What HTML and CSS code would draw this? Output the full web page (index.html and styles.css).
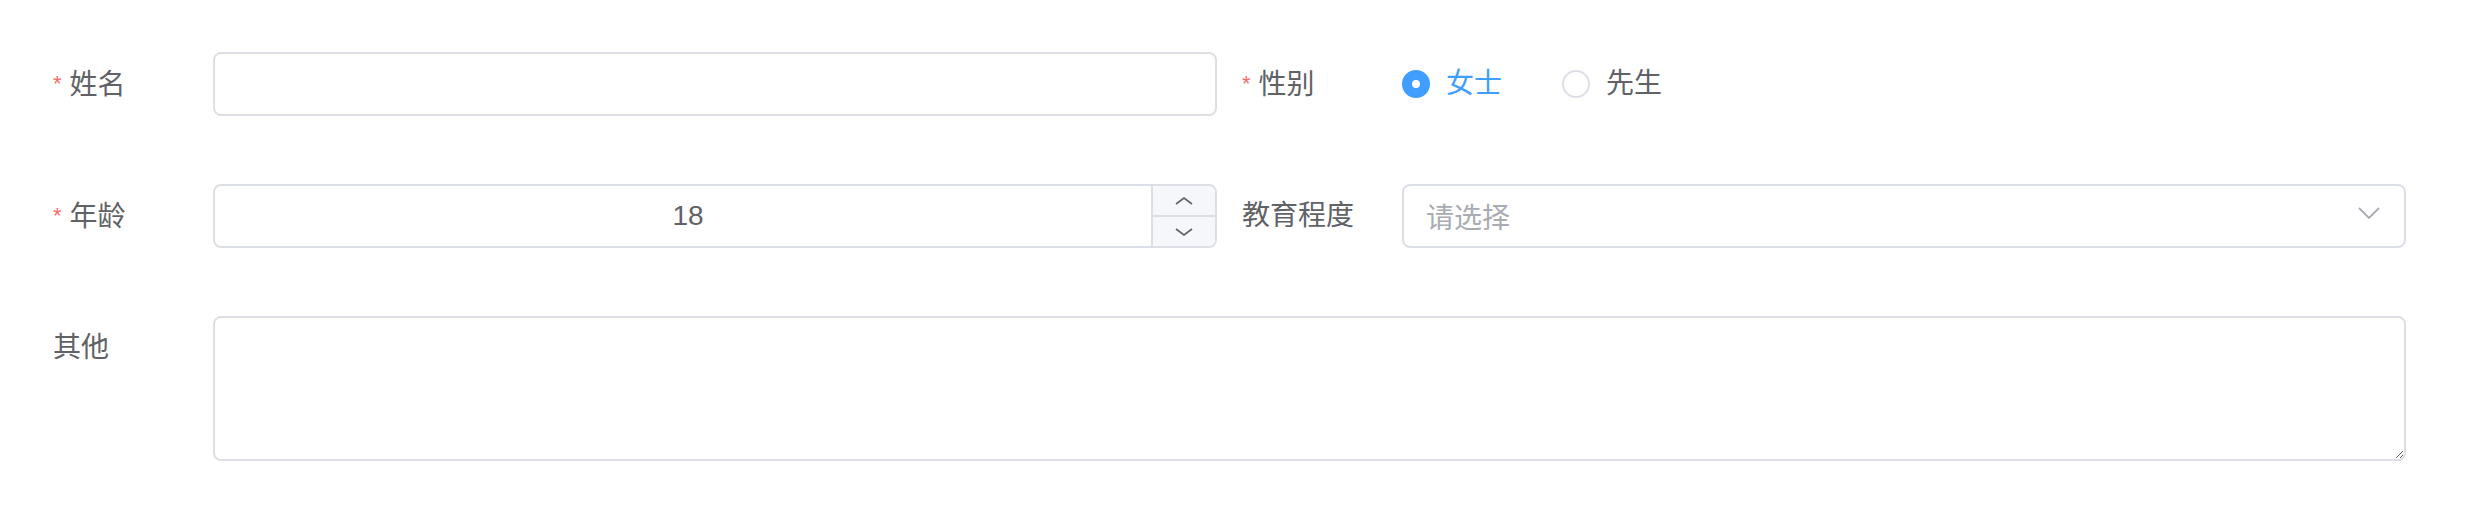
FILE: index.html
```html
<!DOCTYPE html>
<html lang="zh-CN">
<head>
<meta charset="utf-8">
<title>Form</title>
<link rel="stylesheet" href="styles.css">
</head>
<body>
<form class="form">
  <div class="row">
    <div class="item">
      <label class="label required">姓名</label>
      <div class="control">
        <input class="input" type="text">
      </div>
    </div>
    <div class="item">
      <label class="label required">性别</label>
      <div class="control radios">
        <label class="radio checked"><span class="radio-dot"></span><span class="radio-text">女士</span></label>
        <label class="radio"><span class="radio-dot"></span><span class="radio-text">先生</span></label>
      </div>
    </div>
  </div>
  <div class="row">
    <div class="item">
      <label class="label required">年龄</label>
      <div class="control">
        <div class="number">
          <input class="number-input" type="text" value="18">
          <div class="number-controls">
            <span class="step step-up"><svg width="18" height="8" viewBox="0 0 18 8"><polyline points="1,7 9,1 17,7" fill="none" stroke="#606266" stroke-width="1.6"/></svg></span>
            <span class="step step-down"><svg width="18" height="8" viewBox="0 0 18 8"><polyline points="1,1 9,7 17,1" fill="none" stroke="#606266" stroke-width="1.6"/></svg></span>
          </div>
        </div>
      </div>
    </div>
    <div class="item">
      <label class="label">教育程度</label>
      <div class="control">
        <div class="select">
          <span class="placeholder">请选择</span>
          <svg class="select-arrow" width="22" height="12" viewBox="0 0 22 12"><polyline points="1,1 11,11 21,1" fill="none" stroke="#a8abb2" stroke-width="1.8"/></svg>
        </div>
      </div>
    </div>
  </div>
  <div class="row row-full">
    <div class="item">
      <label class="label label-top">其他</label>
      <div class="control">
        <textarea class="textarea"></textarea>
      </div>
    </div>
  </div>
</form>
</body>
</html>
```

FILE: styles.css
```css
* {
  box-sizing: border-box;
}

body {
  margin: 0;
  background: #ffffff;
  font-family: "Liberation Sans", "Noto Sans CJK SC", sans-serif;
  font-size: 28px;
  color: #606266;
}

.form {
  display: grid;
  row-gap: 68px;
  padding: 52px 66px 0 53px;
}

.row {
  display: grid;
  grid-template-columns: 1fr 1fr;
  column-gap: 25px;
}

.row-full {
  grid-template-columns: 1fr;
}

.item {
  display: flex;
  align-items: flex-start;
}

.label {
  flex: none;
  width: 160px;
  line-height: 64px;
  height: 64px;
  font-size: 28px;
  color: #606266;
}

.required::before {
  content: "*";
  color: #f56c6c;
  font-size: 22px;
  margin-right: 8px;
  vertical-align: 3px;
}

.control {
  flex: 1;
  min-width: 0;
}

.input {
  display: block;
  width: 100%;
  height: 64px;
  border: 2px solid #dcdfe6;
  border-radius: 8px;
  padding: 0 22px;
  font: inherit;
  color: #606266;
  outline: none;
  background: #fff;
}

/* radios */
.radios {
  display: flex;
  align-items: center;
  height: 64px;
}

.radio {
  display: inline-flex;
  align-items: center;
  margin-right: 60px;
  color: #606266;
}

.radio-dot {
  width: 28px;
  height: 28px;
  border-radius: 50%;
  border: 2px solid #dcdfe6;
  background: #fff;
  display: inline-flex;
  align-items: center;
  justify-content: center;
}

.radio-text {
  padding-left: 16px;
  line-height: 1;
}

.radio.checked {
  color: #409eff;
}

.radio.checked .radio-dot {
  background: #409eff;
  border-color: #409eff;
}

.radio.checked .radio-dot::after {
  content: "";
  width: 8px;
  height: 8px;
  border-radius: 50%;
  background: #fff;
}

/* number input */
.number {
  display: flex;
  height: 64px;
  border: 2px solid #dcdfe6;
  border-radius: 8px;
  overflow: hidden;
  background: #fff;
}

.number-input {
  flex: 1;
  min-width: 0;
  border: none;
  outline: none;
  padding: 0 0 0 10px;
  font: inherit;
  color: #606266;
  text-align: center;
  background: transparent;
}

.number-controls {
  flex: none;
  width: 64px;
  border-left: 2px solid #dcdfe6;
  display: flex;
  flex-direction: column;
  background: #f5f7fa;
}

.step {
  flex: 1;
  display: flex;
  align-items: center;
  justify-content: center;
}

.step-up {
  border-bottom: 2px solid #dcdfe6;
}

/* select */
.select {
  display: flex;
  align-items: center;
  justify-content: space-between;
  height: 64px;
  border: 2px solid #dcdfe6;
  border-radius: 8px;
  padding: 0 24px 0 22px;
  background: #fff;
}

.placeholder {
  color: #a8abb2;
}

.select-arrow {
  margin-top: -6px;
}

/* textarea */
.textarea {
  display: block;
  width: 100%;
  height: 145px;
  border: 2px solid #dcdfe6;
  border-radius: 8px;
  padding: 10px 22px;
  font: inherit;
  line-height: 1.5;
  color: #606266;
  outline: none;
  resize: vertical;
  background: #fff;
}
```
